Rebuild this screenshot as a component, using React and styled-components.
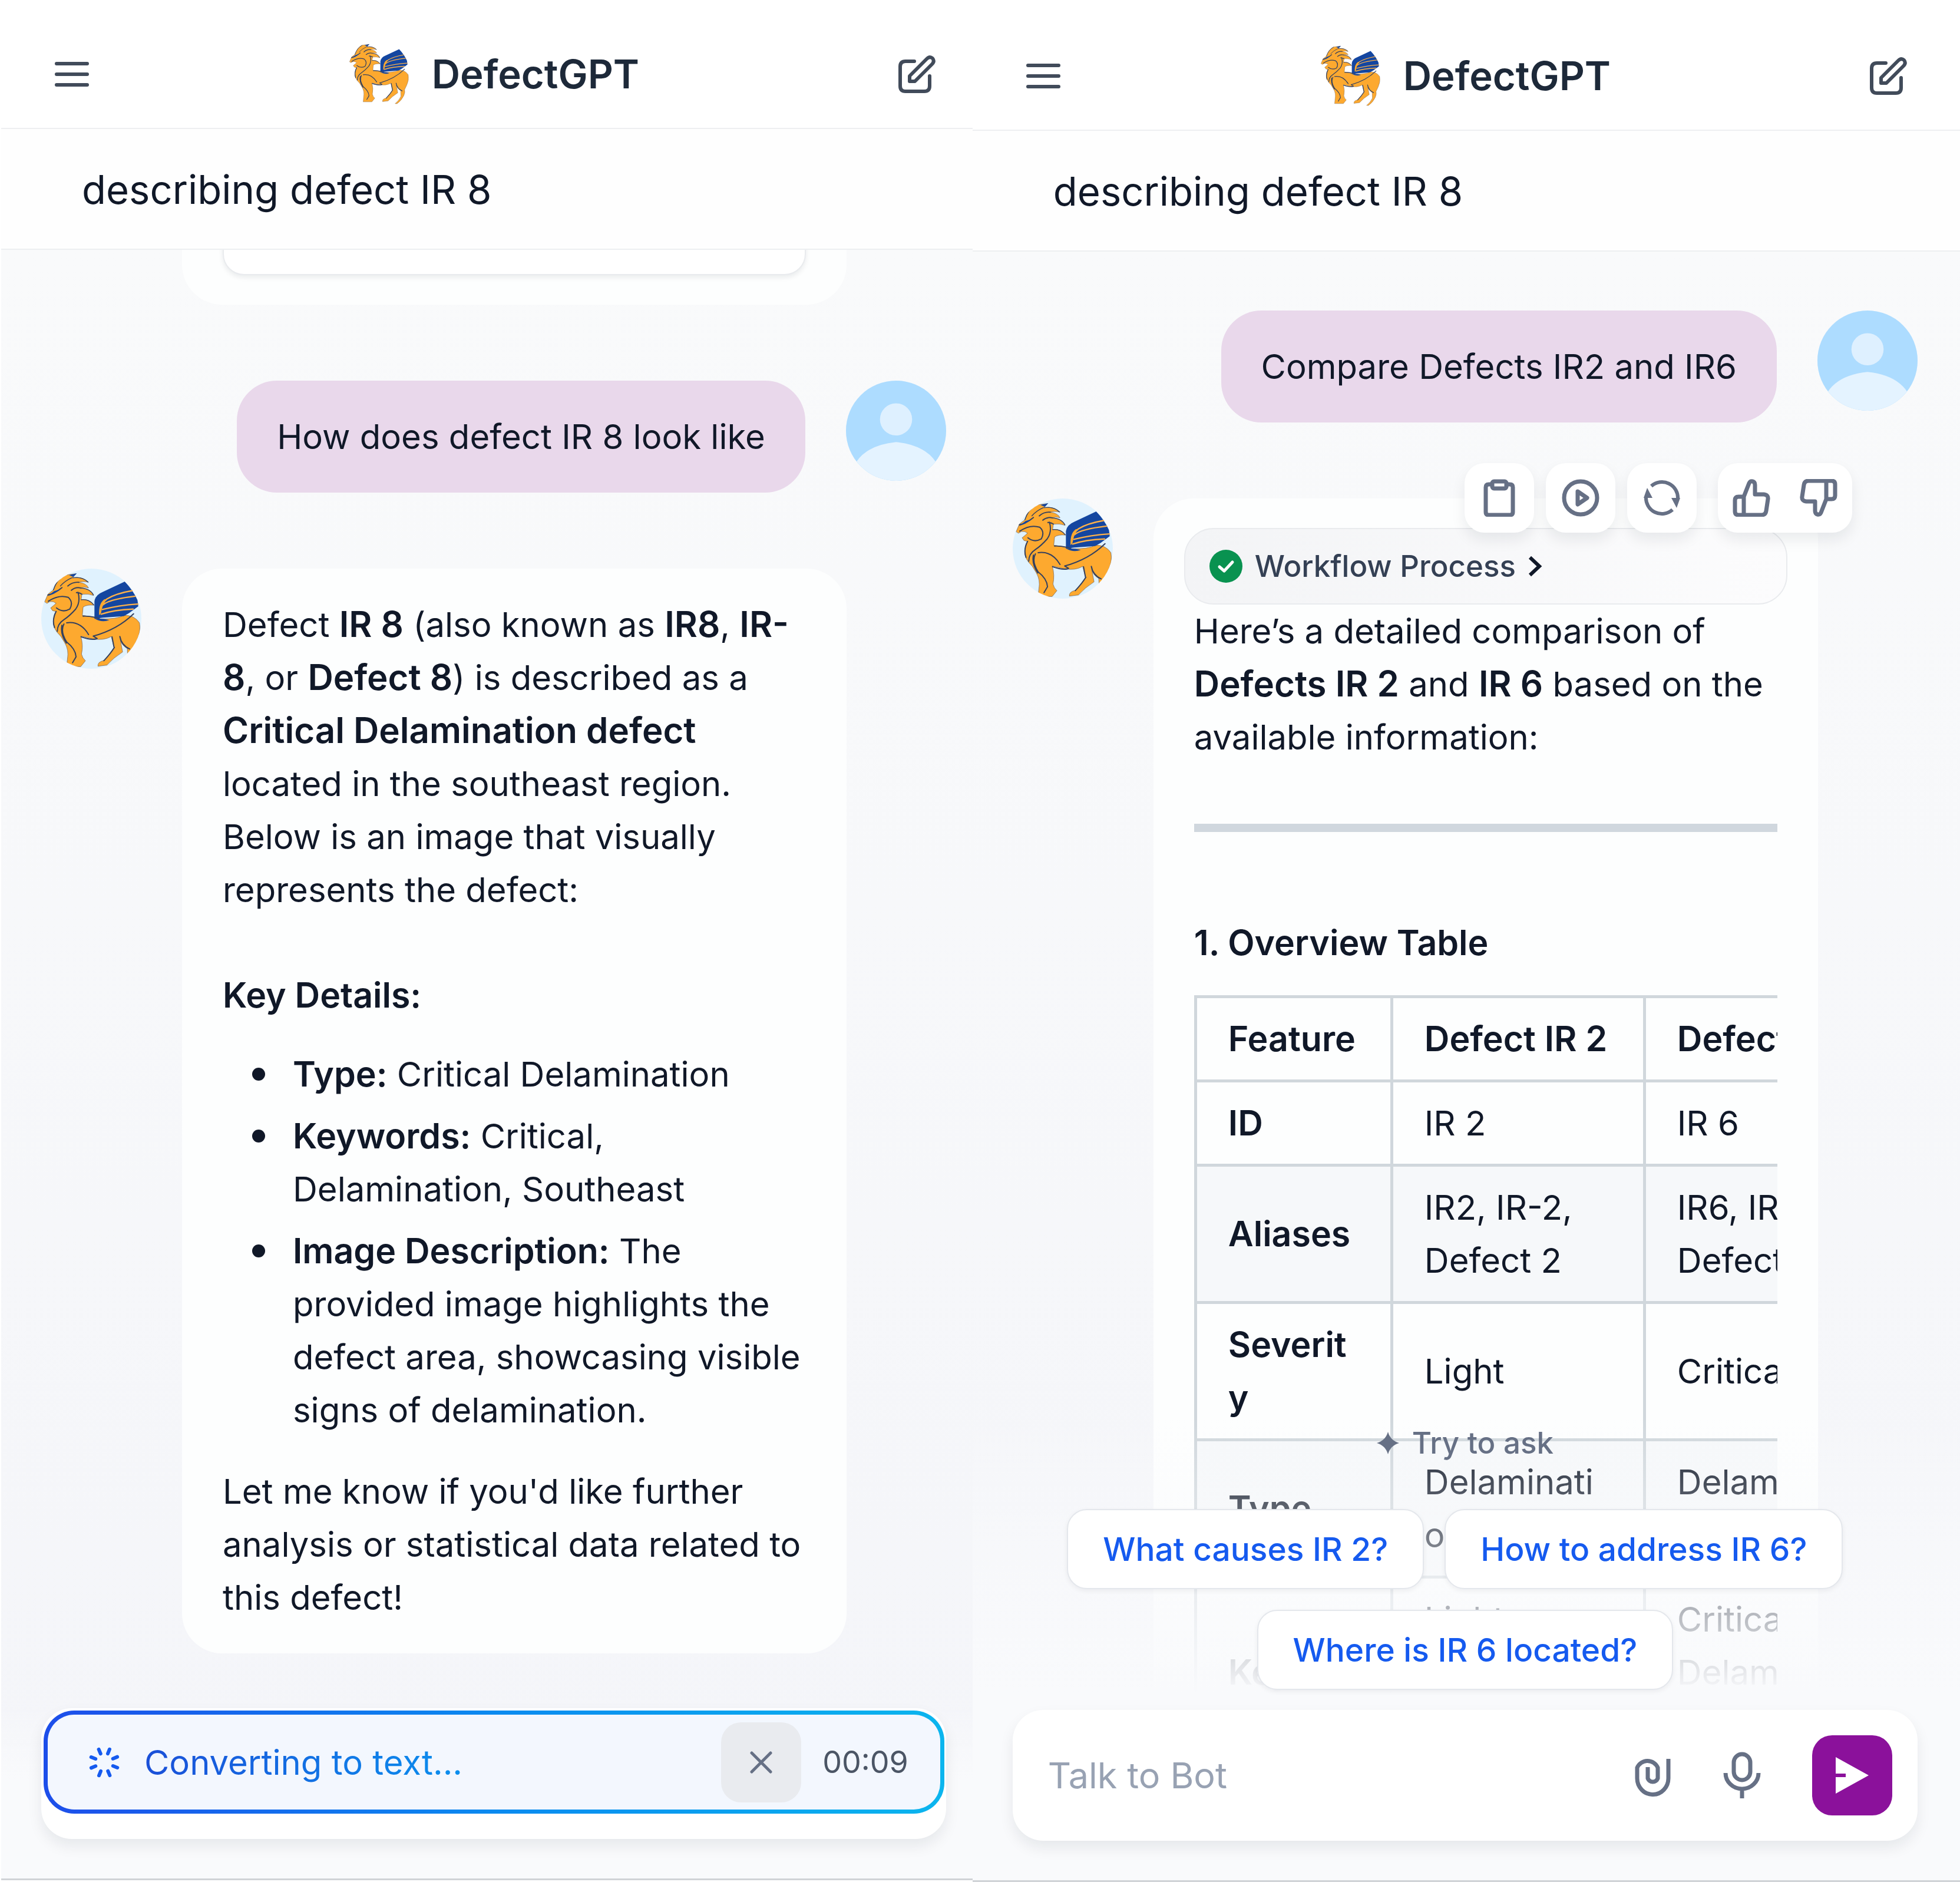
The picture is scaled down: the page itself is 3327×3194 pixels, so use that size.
import React from "react";
import styled, { createGlobalStyle, css } from "styled-components";

const GlobalStyle = createGlobalStyle`
  * { box-sizing: border-box; }
  body {
    margin: 0;
    background: #ffffff;
    color: #101828;
    font-family: Inter, "Liberation Sans", sans-serif;
    font-size: 58px;
    line-height: 90px;
  }
  button, input { font: inherit; color: inherit; }
  button { border: 0; padding: 0; background: none; cursor: pointer; }
  p, h1, h2, h3, ul { margin: 0; font: inherit; }
  svg { display: block; flex: none; }
  strong { font-size: 60px; font-weight: 600; line-height: 1; }
`;

/* ---------- shell ---------- */

const Workspace = styled.main`
  display: grid;
  grid-template-columns: 65fr 66fr;
  height: 100vh;
  overflow: hidden;
`;

const Screen = styled.section`
  position: relative;
  display: flex;
  flex-direction: column;
  min-width: 0;
  min-height: 0;
  margin: ${(p) => (p.$second ? "3px 0 0" : "0 0 3px 2px")};
  border-bottom: 3px solid #d0d3d7;
  --edge: ${(p) => (p.$second ? "27px" : "0px")};
`;

const TopBar = styled.header`
  display: flex;
  align-items: center;
  justify-content: space-between;
  height: 219px;
  padding: 34px calc(63px + var(--edge)) 0 90px;
  border-bottom: 2px solid #eeeff1;
  color: #414b5a;
`;

const Brand = styled.div`
  display: flex;
  align-items: center;
  gap: 36px;
`;

const BrandName = styled.h1`
  color: #1d2939;
  font-size: 67px;
  font-weight: 600;
`;

const TitleBar = styled.div`
  display: flex;
  align-items: center;
  height: 205px;
  padding: 2px 0 0 137px;
  border-bottom: 2px solid #edeff1;
  background: #fefefe;
`;

const ConversationTitle = styled.h2`
  font-size: 67px;
`;

const Messages = styled.div`
  flex: 1;
  min-height: 0;
  display: flex;
  flex-direction: column;
  justify-content: ${(p) => (p.$pinned ? "flex-end" : "flex-start")};
  gap: 129px;
  padding: 100px calc(45px + var(--edge)) ${(p) => (p.$pinned ? "382px" : "0")} 68px;
  overflow: hidden;
  background: linear-gradient(#f9fafb, #f4f5f9);
`;

const Row = styled.div`
  display: flex;
  flex: none;
  align-items: flex-start;
  gap: 69px;
  justify-content: ${(p) => (p.$mine ? "flex-end" : "flex-start")};
`;

const Avatar = styled.div`
  flex: none;
  width: 170px;
  height: 170px;
  border-radius: 50%;
  overflow: hidden;
  background: #e0f2fe;
`;

const Spacer = styled.div`
  flex: none;
  width: 170px;
`;

const UserBubble = styled.div`
  padding: 50px 68px;
  border-radius: 68px;
  background: #e9d8eb;
`;

const BotBubble = styled.article`
  position: relative;
  flex: 1;
  min-width: 0;
  margin-right: 169px;
  padding: 50px 69px;
  border-radius: 68px;
  background: #fdfefe;
`;

const ImageCard = styled.div`
  height: 420px;
  border: 2px solid #e9ebee;
  border-radius: 36px;
  background: #ffffff;
  box-shadow: 0 4px 8px rgba(16, 24, 40, 0.08);
`;

const SectionTitle = styled.h3`
  margin-top: ${(p) => p.$top}px;
  margin-bottom: 44px;
  font-size: 59px;
  font-weight: 600;
`;

const DetailList = styled.ul`
  display: grid;
  gap: 15px;
  margin-bottom: 48px;
  padding: 0;
  list-style: none;
`;

const Detail = styled.li`
  display: grid;
  grid-template-columns: 119px 1fr;

  strong { font-size: 59px; }

  &::before {
    content: "";
    width: 22px;
    height: 22px;
    margin: 34px 0 0 50px;
    border-radius: 50%;
    background: #101828;
  }
`;

/* ---------- bot reply tools ---------- */

const Tools = styled.div`
  position: absolute;
  top: -60px;
  right: -58px;
  display: flex;
  gap: 20px;
  color: #667085;
`;

const toolCard = css`
  border-radius: 34px;
  background: #ffffff;
  box-shadow: 0 12px 24px rgba(16, 24, 40, 0.08);
`;

const ToolButton = styled.button`
  display: grid;
  place-items: center;
  width: 118px;
  height: 118px;
  ${(p) => !p.$bare && toolCard}
`;

const VoteGroup = styled.div`
  display: flex;
  margin-left: 16px;
  ${toolCard}
  ${ToolButton} { width: 114px; }
`;

const Workflow = styled.button`
  display: flex;
  align-items: center;
  gap: 21px;
  width: calc(100% + 34px);
  height: 130px;
  margin: 0 -17px;
  padding: 0 41px;
  border: 2px solid #e9ebee;
  border-radius: 50px;
  background: linear-gradient(90deg, #f3f4f6, #fcfcfd);
  color: #344054;
  font-size: 51px;
  font-weight: 500;
`;

const Rule = styled.hr`
  height: 14px;
  margin: 102px 0 0;
  border: 0;
  background: #d0d7de;
`;

const TableScroll = styled.div`
  overflow: hidden;
`;

const Table = styled.table`
  table-layout: fixed;
  width: 1191px;
  border-collapse: collapse;
  text-align: left;
  overflow-wrap: anywhere;

  th, td {
    padding: 24px 52px 24px 53px;
    border: 5px solid #d0d7dc;
    font-weight: 400;
  }
  th { font-size: 59px; font-weight: 600; }
  tbody tr:nth-child(even) { background: #f6f8fa; }
`;

const Col = styled.col`
  width: ${(p) => (p.$narrow ? 333 : 429)}px;
`;

/* ---------- footer ---------- */

const Footer = styled.footer`
  position: absolute;
  inset: auto 0 0 0;
  padding: 0 calc(45px + var(--edge)) 67px 68px;
  background: linear-gradient(rgba(249, 250, 252, 0), #f9fafc ${(p) => p.$fade}px);
`;

const Suggestions = styled.div`
  display: grid;
  justify-items: center;
  gap: 35px;
  padding-bottom: 34px;
`;

const TryLabel = styled.div`
  display: flex;
  align-items: center;
  gap: 22px;
  margin-bottom: 32px;
  color: #667085;
  font-size: 51px;
  font-weight: 500;
`;

const ChipRow = styled.div`
  display: flex;
  gap: 35px;
  padding-right: ${(p) => (p.$trailing ? 34 : 0)}px;
`;

const Chip = styled.button`
  height: 136px;
  padding: 0 59px;
  border: 2px solid #e4e7ec;
  border-radius: 34px;
  background: #ffffff;
  box-shadow: 0 3px 8px rgba(16, 24, 40, 0.06);
  color: #155aef;
  font-size: 55px;
  font-weight: 500;
  white-space: nowrap;
`;

const Composer = styled.form`
  height: 222px;
  border-radius: 52px;
  background: #ffffff;
  box-shadow: 0 12px 24px rgba(16, 24, 40, 0.08);
`;

const TextComposer = styled(Composer)`
  display: flex;
  align-items: center;
  padding: 0 43px 0 60px;
  color: #667085;
`;

const TextBox = styled.input`
  flex: 1;
  min-width: 0;
  padding: 0;
  border: 0;
  outline: 0;
  background: none;
  font-size: 61px;

  &::placeholder { color: #98a2b3; opacity: 1; }
`;

const IconButton = styled.button`
  display: grid;
  place-items: center;
  width: ${(p) => p.$width || 64}px;
  height: 136px;
`;

const SendButton = styled(IconButton)`
  width: 136px;
  border-radius: 34px;
  background: #8b119b;
  color: #ffffff;
`;

const VoiceComposer = styled(Composer)`
  padding: 4px 3px 43px 4px;
`;

const Recorder = styled.div`
  display: flex;
  align-items: center;
  height: 175px;
  padding: 0 54px 0 68px;
  border: 7px solid transparent;
  border-radius: 52px;
  background:
    linear-gradient(#f3f7fe, #f3f7fe) padding-box,
    linear-gradient(90deg, #1d4eea, #0b8af0 50%, #0bb5ee) border-box;
  color: #155aef;
`;

const RecorderText = styled.span`
  margin-left: 40px;
  background: linear-gradient(90deg, #1a4fd8, #0b8fee);
  background-clip: text;
  color: transparent;
`;

const CancelButton = styled(IconButton)`
  width: 136px;
  margin: 0 36px 0 auto;
  border-radius: 34px;
  background: #e9ebef;
  color: #667085;
`;

const Timer = styled.time`
  color: #4b5565;
  font-size: 52px;
`;

/* ---------- drawings ---------- */

const Stroke = ({ w = 64, h = 64, width = 7, children }) => (
  <svg width={w} height={h} viewBox={`0 0 ${w} ${h}`} fill="none" stroke="currentColor"
    strokeWidth={width} strokeLinecap="round" strokeLinejoin="round" aria-hidden="true">
    {children}
  </svg>
);

const MenuIcon = () => (
  <Stroke w={60} h={44} width={6}><path d="M4 4H56M4 22H56M4 40H56" /></Stroke>
);

const EditIcon = () => (
  <Stroke w={64} h={66} width={6}>
    <path d="M28 11H13Q4 11 4 20V53Q4 62 13 62H45Q54 62 54 53V36" />
    <path d="M20 45V36L49 7Q54 2 59 6Q63 11 58 16L29 45Z" />
  </Stroke>
);

const ClipboardIcon = () => (
  <Stroke>
    <path d="M19 9H14Q9 9 9 14V56Q9 61 14 61H50Q55 61 55 56V14Q55 9 50 9H45" />
    <rect x="20" y="4" width="24" height="12" rx="3" />
  </Stroke>
);

const PlayIcon = () => (
  <Stroke><circle cx="32" cy="32" r="28" /><path d="M27 21L43 32L27 43Z" /></Stroke>
);

const RefreshIcon = () => (
  <svg width="64" height="64" viewBox="0 0 64 64" fill="none" aria-hidden="true">
    <path d="M14 12A27 27 0 0 1 59 34M50 52A27 27 0 0 1 5 30" stroke="currentColor" strokeWidth="6" />
    <path d="M7 15L1 32H16ZM57 49L63 32H48Z" fill="currentColor" />
  </svg>
);

const ThumbUp = () => (
  <path d="M19 61V30L28 7Q30 3 34 4Q38 5 38 10V26H53Q61 27 60 34L57 54Q56 61 49 61H10Q4 61 4 55V36Q4 30 10 30H19" />
);

const LikeIcon = () => <Stroke><ThumbUp /></Stroke>;
const DislikeIcon = () => <Stroke><g transform="rotate(180 32 32)"><ThumbUp /></g></Stroke>;

const ChevronIcon = () => (
  <svg width="24" height="36" viewBox="0 0 24 36" fill="none" stroke="#101828" strokeWidth="6" aria-hidden="true">
    <path d="M3 3L19 18L3 33" />
  </svg>
);

const CheckIcon = () => (
  <svg width="56" height="56" viewBox="0 0 56 56" fill="none" aria-hidden="true">
    <circle cx="28" cy="28" r="28" fill="#099250" />
    <path d="M17 29L25 36L39 21" stroke="#ffffff" strokeWidth="5" strokeLinecap="round" strokeLinejoin="round" />
  </svg>
);

const StarIcon = () => (
  <svg width="38" height="38" viewBox="0 0 36 36" fill="currentColor" aria-hidden="true">
    <path d="M18 0Q22 14 36 18Q22 22 18 36Q14 22 0 18Q14 14 18 0Z" />
  </svg>
);

const ClipIcon = () => (
  <svg width="62" height="72" viewBox="0 0 62 72" fill="none" stroke="currentColor" strokeWidth="7" aria-hidden="true">
    <path d="M57 8V41A26 27 0 0 1 4 41V23A19 19 0 0 1 39 23V41A9 9 0 0 1 22 41V22" />
  </svg>
);

const MicIcon = () => (
  <svg width="64" height="80" viewBox="0 0 64 80" fill="none" stroke="currentColor" strokeWidth="7" aria-hidden="true">
    <rect x="18" y="4" width="28" height="44" rx="14" />
    <path d="M4 36A28 27 0 0 0 60 36M32 61V79" />
  </svg>
);

const SendIcon = () => (
  <svg width="56" height="62" viewBox="0 0 56 62" fill="currentColor" aria-hidden="true">
    <path d="M0 0L56 31L0 62V34H17V28H0Z" />
  </svg>
);

const CloseIcon = () => <Stroke w={38} h={38} width={5}><path d="M3 3L35 35M35 3L3 35" /></Stroke>;

const SpinnerIcon = () => (
  <Stroke w={56} h={56} width={6}>
    {[22, 67, 112, 157, 202, 247, 292, 337].map((angle) => (
      <path key={angle} d="M28 4V12" transform={`rotate(${angle} 28 28)`} />
    ))}
  </Stroke>
);

const Griffin = ({ width, height, viewBox }) => (
  <svg width={width} height={height} viewBox={viewBox} fill="none" strokeLinecap="round"
    strokeLinejoin="round" role="img" aria-label="Winged lion">
    <path
      fill="#fda92f"
      stroke="#6b5a52"
      strokeWidth="2"
      d="M48 198L64 160L92 138Q110 82 150 62L208 55L190 76Q240 68 270 98Q240 92 222 99
        Q262 104 272 128Q250 120 232 128Q282 132 297 166Q270 156 238 160L234 188
        Q276 182 301 216Q262 212 244 226L240 268Q290 274 330 286Q420 288 452 268
        Q506 266 532 306Q540 350 520 392L502 430Q508 452 496 478Q476 520 440 545L424 545
        Q458 516 472 484L470 438Q440 420 434 392L446 455Q400 484 366 522L320 528
        Q316 506 352 498Q384 462 402 432L388 376Q350 398 292 388L232 374Q246 420 236 466
        Q240 486 256 500L232 530H160L164 490Q172 444 150 408L130 375Q84 332 92 290
        Q96 262 106 248L88 244L78 230Q96 216 106 206Q92 194 74 198L60 206Z"
    />
    <path fill="#1446a0" d="M302 286V196Q306 164 345 148L457 95Q500 140 522 190L526 222L480 256L452 272L345 280Z" />
    <path
      stroke="#fbb04a"
      strokeWidth="7"
      d="M334 236Q340 204 366 184Q412 156 494 142M346 214Q376 186 510 170M342 238Q430 216 524 210M336 262Q400 240 500 236"
    />
    <path fill="#fda92f" d="M326 268Q322 208 352 186L366 184Q340 216 336 256Z" />
    <path
      stroke="#33405f"
      strokeWidth="6"
      d="M64 164Q100 156 136 126M218 150Q232 200 206 236Q176 270 146 290Q112 312 112 350
        M66 196Q120 160 168 176Q196 200 176 236Q140 256 108 230M160 306Q230 296 272 366
        M146 312Q126 350 160 404Q206 440 208 480L190 510M136 318Q126 360 158 410
        M244 272Q300 270 340 292M502 260Q420 340 296 374M296 374L316 386
        M392 378L402 430M432 376Q440 420 482 440M222 99Q190 96 166 118
        M232 128Q204 122 184 140M238 160Q224 150 210 152M106 248Q84 290 98 330
        M234 378Q286 396 312 388M404 432Q384 464 350 500"
    />
    <path stroke="#33405f" strokeWidth="4" d="M186 76Q150 92 128 118M92 138Q110 84 150 64M190 76Q240 68 270 98M232 128Q282 132 297 164M234 188Q276 184 298 214" />
    <path fill="#1446a0" d="M304 286Q340 282 378 292Q342 306 304 286ZM62 170L94 158L130 134L96 144ZM172 62L212 53L194 72Z" />
  </svg>
);

const BotAvatar = () => (
  <Avatar><Griffin width={170} height={170} viewBox="30 29 512 512" /></Avatar>
);

const UserAvatar = () => (
  <Avatar>
    <svg width="170" height="170" viewBox="0 0 168 168" aria-hidden="true">
      <rect width="168" height="168" fill="#addcff" />
      <circle cx="84" cy="65" r="27" fill="#def0ff" />
      <path d="M6 168Q14 110 84 103Q154 110 162 168Z" fill="#e4f3ff" />
    </svg>
  </Avatar>
);

/* ---------- composition ---------- */

const ScreenHeader = () => (
  <>
    <TopBar>
      <button type="button" aria-label="Open menu"><MenuIcon /></button>
      <Brand>
        <Griffin width={106} height={106} viewBox="36 44 516 516" />
        <BrandName>DefectGPT</BrandName>
      </Brand>
      <button type="button" aria-label="New chat"><EditIcon /></button>
    </TopBar>
    <TitleBar><ConversationTitle>describing defect IR 8</ConversationTitle></TitleBar>
  </>
);

const UserMessage = ({ children }) => (
  <Row $mine>
    <UserBubble>{children}</UserBubble>
    <UserAvatar />
  </Row>
);

const rows = [
  ["ID", "IR 2", "IR 6"],
  ["Aliases", "IR2, IR-2, Defect 2", "IR6, IR-6, Defect 6"],
  ["Severity", "Light", "Critical"],
  ["Type", "Delamination", "Delamination"],
  ["Keywords", "Light, Delamination, Southeast", "Critical, Delamination, Southeast"],
];

export default function App() {
  return (
    <>
      <GlobalStyle />
      <Workspace>
        <Screen>
          <ScreenHeader />
          <Messages $pinned>
            <Row>
              <Spacer />
              <BotBubble><ImageCard /></BotBubble>
            </Row>
            <UserMessage>How does defect IR 8 look like</UserMessage>
            <Row>
              <BotAvatar />
              <BotBubble>
                <p>
                  Defect <strong>IR 8</strong> (also known as <strong>IR8</strong>, <strong>IR-8</strong>, or{" "}
                  <strong>Defect 8</strong>) is described as a <strong>Critical Delamination defect</strong>{" "}
                  located in the southeast region. Below is an image that visually represents the defect:
                </p>
                <SectionTitle $top={89}>Key Details:</SectionTitle>
                <DetailList>
                  <Detail><span><strong>Type:</strong> Critical Delamination</span></Detail>
                  <Detail><span><strong>Keywords:</strong> Critical, Delamination, Southeast</span></Detail>
                  <Detail>
                    <span>
                      <strong>Image Description:</strong> The provided image highlights the defect area,
                      showcasing visible signs of delamination.
                    </span>
                  </Detail>
                </DetailList>
                <p>Let me know if you'd like further analysis or statistical data related to this defect!</p>
              </BotBubble>
            </Row>
          </Messages>
          <Footer $fade={120}>
            <VoiceComposer onSubmit={(e) => e.preventDefault()}>
              <Recorder>
                <SpinnerIcon />
                <RecorderText>Converting to text...</RecorderText>
                <CancelButton type="button" aria-label="Cancel"><CloseIcon /></CancelButton>
                <Timer>00:09</Timer>
              </Recorder>
            </VoiceComposer>
          </Footer>
        </Screen>

        <Screen $second>
          <ScreenHeader />
          <Messages>
            <UserMessage>Compare Defects IR2 and IR6</UserMessage>
            <Row>
              <BotAvatar />
              <BotBubble>
                <Workflow type="button">
                  <CheckIcon />
                  Workflow Process
                  <ChevronIcon />
                </Workflow>
                <p>
                  Here’s a detailed comparison of <strong>Defects IR 2</strong> and <strong>IR 6</strong> based
                  on the available information:
                </p>
                <Rule />
                <SectionTitle $top={143}>1. Overview Table</SectionTitle>
                <TableScroll>
                  <Table>
                    <colgroup><Col $narrow /><Col /><Col /></colgroup>
                    <thead>
                      <tr><th>Feature</th><th>Defect IR 2</th><th>Defect IR 6</th></tr>
                    </thead>
                    <tbody>
                      {rows.map(([name, first, second]) => (
                        <tr key={name}><th scope="row">{name}</th><td>{first}</td><td>{second}</td></tr>
                      ))}
                    </tbody>
                  </Table>
                </TableScroll>
                <Tools>
                  <ToolButton type="button" aria-label="Copy"><ClipboardIcon /></ToolButton>
                  <ToolButton type="button" aria-label="Play"><PlayIcon /></ToolButton>
                  <ToolButton type="button" aria-label="Regenerate"><RefreshIcon /></ToolButton>
                  <VoteGroup>
                    <ToolButton $bare type="button" aria-label="Like"><LikeIcon /></ToolButton>
                    <ToolButton $bare type="button" aria-label="Dislike"><DislikeIcon /></ToolButton>
                  </VoteGroup>
                </Tools>
              </BotBubble>
            </Row>
          </Messages>
          <Footer $fade={470}>
            <Suggestions>
              <TryLabel><StarIcon />Try to ask</TryLabel>
              <ChipRow $trailing>
                <Chip type="button">What causes IR 2?</Chip>
                <Chip type="button">How to address IR 6?</Chip>
              </ChipRow>
              <ChipRow>
                <Chip type="button">Where is IR 6 located?</Chip>
              </ChipRow>
            </Suggestions>
            <TextComposer onSubmit={(e) => e.preventDefault()}>
              <TextBox aria-label="Talk to Bot" placeholder="Talk to Bot" />
              <IconButton type="button" aria-label="Attach file"><ClipIcon /></IconButton>
              <IconButton type="button" aria-label="Record voice" $width={238}><MicIcon /></IconButton>
              <SendButton type="submit" aria-label="Send"><SendIcon /></SendButton>
            </TextComposer>
          </Footer>
        </Screen>
      </Workspace>
    </>
  );
}
